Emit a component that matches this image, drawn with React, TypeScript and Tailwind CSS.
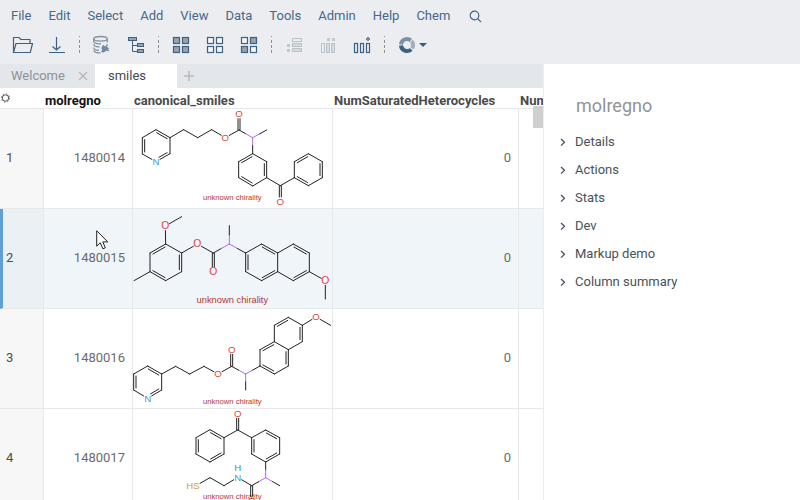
import React from "react";

type Atom = [number, number, string?];
type Bond = [number, number, ("double" | "ring")?];

interface Molecule {
  viewBox: string;
  atoms: Atom[];
  bonds: Bond[];
  rings: number[][];
  chiral: number;
  captionY: number;
  captionSize: number;
  labelSize: number;
}

const LABEL_COLORS: Record<string, string> = {
  O: "#dc4840",
  N: "#3f97d6",
  H: "#3d8fc8",
  HS: "#d39a48",
};

const MOLECULES: Molecule[] = [
  {
    viewBox: "9 12 600 300",
    atoms: [
      [78, 74], [120, 98], [120, 146], [78, 170, "N"], [37, 147], [37, 98],
      [161, 74], [203, 98], [245, 74], [286, 98, "O"], [327, 75], [327, 27, "O"],
      [368, 98], [410, 75],
      [368, 146], [410, 170], [410, 218], [368, 243], [326, 218], [326, 170],
      [451, 242], [451, 290, "O"],
      [493, 218], [493, 170], [535, 146], [577, 170], [577, 218], [535, 242],
    ],
    bonds: [
      [0, 1, "ring"], [1, 2], [2, 3, "ring"], [3, 4], [4, 5, "ring"], [5, 0],
      [1, 6], [6, 7], [7, 8], [8, 9], [9, 10], [10, 11, "double"], [10, 12], [12, 13],
      [12, 14], [14, 15], [15, 16, "ring"], [16, 17], [17, 18, "ring"], [18, 19], [19, 14, "ring"],
      [16, 20], [20, 21, "double"], [20, 22],
      [22, 23], [23, 24, "ring"], [24, 25], [25, 26, "ring"], [26, 27], [27, 22, "ring"],
    ],
    rings: [[0, 1, 2, 3, 4, 5], [14, 15, 16, 17, 18, 19], [22, 23, 24, 25, 26, 27]],
    chiral: 12,
    captionY: 285,
    captionSize: 23,
    labelSize: 29,
  },
  {
    viewBox: "9 3 600 300",
    atoms: [
      [60, 135], [107, 108], [155, 135], [155, 191], [107, 218], [60, 191],
      [12, 218], [106, 54, "O"], [155, 26], [202, 108, "O"], [250, 135], [250, 191, "O"],
      [298, 108], [298, 53],
      [347, 135], [395, 108], [443, 135], [443, 191], [395, 218], [347, 191],
      [490, 108], [538, 135], [538, 191], [490, 218], [586, 218, "O"], [586, 273],
    ],
    bonds: [
      [0, 1, "ring"], [1, 2], [2, 3, "ring"], [3, 4], [4, 5, "ring"], [5, 0],
      [5, 6], [1, 7], [7, 8], [2, 9], [9, 10], [10, 11, "double"], [10, 12], [12, 13], [12, 14],
      [14, 15], [15, 16, "ring"], [16, 17], [17, 18, "ring"], [18, 19], [19, 14, "ring"],
      [16, 20], [20, 21, "ring"], [21, 22], [22, 23, "ring"], [23, 17], [22, 24], [24, 25],
    ],
    rings: [[0, 1, 2, 3, 4, 5], [14, 15, 16, 17, 18, 19], [16, 20, 21, 22, 23, 17]],
    chiral: 12,
    captionY: 285,
    captionSize: 28,
    labelSize: 31,
  },
  {
    viewBox: "9 3 600 300",
    atoms: [
      [53, 174], [95, 198], [95, 246], [53, 271, "N"], [11, 246], [11, 198],
      [137, 175], [179, 198], [222, 175], [264, 198, "O"], [305, 175], [305, 125, "O"],
      [347, 198], [347, 246],
      [390, 174], [390, 125], [433, 101], [475, 125], [475, 174], [433, 198],
      [433, 52], [475, 28], [517, 52], [517, 101], [558, 27, "O"], [602, 52],
    ],
    bonds: [
      [0, 1, "ring"], [1, 2], [2, 3, "ring"], [3, 4], [4, 5, "ring"], [5, 0],
      [1, 6], [6, 7], [7, 8], [8, 9], [9, 10], [10, 11, "double"], [10, 12], [12, 13], [12, 14],
      [14, 15], [15, 16, "ring"], [16, 17], [17, 18, "ring"], [18, 19], [19, 14, "ring"],
      [16, 20], [20, 21, "ring"], [21, 22], [22, 23, "ring"], [23, 17], [22, 24], [24, 25],
    ],
    rings: [[0, 1, 2, 3, 4, 5], [14, 15, 16, 17, 18, 19], [16, 20, 21, 22, 23, 17]],
    chiral: 12,
    captionY: 289,
    captionSize: 23,
    labelSize: 29,
  },
  {
    viewBox: "9 12 600 300",
    atoms: [
      [240, 74], [282, 98], [282, 147], [240, 171], [198, 147], [198, 98],
      [323, 75], [323, 26, "O"],
      [365, 98], [407, 75], [449, 98], [449, 147], [407, 171], [365, 147],
      [407, 218], [449, 242], [365, 242], [365, 288, "O"], [323, 217, "N"], [323, 188, "H"],
      [282, 242], [240, 218], [198, 242, "HS"],
    ],
    bonds: [
      [0, 1, "ring"], [1, 2], [2, 3, "ring"], [3, 4], [4, 5, "ring"], [5, 0],
      [1, 6], [6, 7, "double"], [6, 8],
      [8, 9], [9, 10, "ring"], [10, 11], [11, 12, "ring"], [12, 13], [13, 8, "ring"],
      [12, 14], [14, 15], [14, 16], [16, 17, "double"], [16, 18], [18, 20], [20, 21], [21, 22],
    ],
    rings: [[0, 1, 2, 3, 4, 5], [8, 9, 10, 11, 12, 13]],
    chiral: 14,
    captionY: 282,
    captionSize: 23,
    labelSize: 29,
  },
];

function Structure({ molecule }: { molecule: Molecule }) {
  const { atoms, bonds, rings, chiral, labelSize } = molecule;

  const lines = bonds.flatMap(([a, b, kind], i) => {
    const [ax, ay, aLabel] = atoms[a];
    const [bx, by, bLabel] = atoms[b];
    const length = Math.hypot(bx - ax, by - ay);
    const ux = (bx - ax) / length;
    const uy = (by - ay) / length;
    const trimA = aLabel ? 14 : 0;
    const trimB = bLabel ? 14 : 0;
    const x1 = ax + ux * trimA;
    const y1 = ay + uy * trimA;
    const x2 = bx - ux * trimB;
    const y2 = by - uy * trimB;
    const out: React.ReactNode[] = [];

    if (kind === "double") {
      [-3, 3].forEach((d) =>
        out.push(<line key={`${i}${d}`} x1={x1 - uy * d} y1={y1 + ux * d} x2={x2 - uy * d} y2={y2 + ux * d} />),
      );
      return out;
    }

    if (a === chiral || b === chiral) {
      const mx = (ax + bx) / 2;
      const my = (ay + by) / 2;
      const violet = "#b866e6";
      out.push(
        <line key={`${i}a`} x1={x1} y1={y1} x2={mx} y2={my} stroke={a === chiral ? violet : undefined} />,
        <line key={`${i}b`} x1={mx} y1={my} x2={x2} y2={y2} stroke={b === chiral ? violet : undefined} />,
      );
      return out;
    }

    out.push(<line key={i} x1={x1} y1={y1} x2={x2} y2={y2} />);

    if (kind === "ring") {
      const ring = rings.find((r) => r.includes(a) && r.includes(b)) ?? [a, b];
      const cx = ring.reduce((s, n) => s + atoms[n][0], 0) / ring.length;
      const cy = ring.reduce((s, n) => s + atoms[n][1], 0) / ring.length;
      const side = (cx - ax) * -uy + (cy - ay) * ux > 0 ? 7 : -7;
      const inA = aLabel ? 0 : 6;
      const inB = bLabel ? 0 : 6;
      out.push(
        <line
          key={`${i}r`}
          x1={x1 + ux * inA - uy * side}
          y1={y1 + uy * inA + ux * side}
          x2={x2 - ux * inB - uy * side}
          y2={y2 - uy * inB + ux * side}
        />,
      );
    }
    return out;
  });

  return (
    <svg viewBox={molecule.viewBox} width="200" height="99" preserveAspectRatio="xMinYMin slice" className="block" fontFamily="'Liberation Sans', Arial, sans-serif">
      <text x="307" y={molecule.captionY} fontSize={molecule.captionSize} fill="#b5382f" textAnchor="middle">
        unknown chirality
      </text>
      <g stroke="#222" strokeWidth="3" strokeLinecap="round">
        {lines}
      </g>
      {atoms.map(([x, y, label], i) =>
        label ? (
          <text
            key={i}
            x={label === "HS" ? x - 9 : x}
            y={y + 10}
            fontSize={labelSize}
            fill={LABEL_COLORS[label]}
            textAnchor="middle"
          >
            {label}
          </text>
        ) : null,
      )}
    </svg>
  );
}

const NAVY = "#3d6185";
const STEEL = "#9aa2ab";
const PALE = "#b9c3c9";

function Glyph({ children }: { children: React.ReactNode }) {
  return (
    <svg width="24" height="20" viewBox="0 0 24 20" fill="none" stroke={NAVY} aria-hidden="true">
      {children}
    </svg>
  );
}

function Squares({ filled }: { filled: boolean[] }) {
  const spots = [[4.5, 2.5], [13.5, 2.5], [4.5, 11.5], [13.5, 11.5]];
  return (
    <Glyph>
      {spots.map(([x, y], i) => (
        <rect key={i} x={x} y={y} width="6" height="6" strokeWidth="1.2" fill={filled[i] ? STEEL : "#f3f5f8"} />
      ))}
    </Glyph>
  );
}

function ToolButton({ label, children }: { label: string; children: React.ReactNode }) {
  return (
    <button type="button" aria-label={label} className="flex h-6 w-[34px] shrink-0 items-center justify-center">
      {children}
    </button>
  );
}

function Divider() {
  return (
    <span className="flex w-[11px] shrink-0 justify-center">
      <svg width="1" height="18" aria-hidden="true">
        <path d="M.5 0V18" stroke="#8b9097" strokeDasharray="1 3 3 2 3 2 3 1" />
      </svg>
    </span>
  );
}

function Toolbar() {
  return (
    <div className="flex h-8 items-center px-1.5 pb-1.5" role="toolbar">
      <ToolButton label="Open file">
        <Glyph>
          <path strokeWidth="1.2" d="M2.5 17.5V2.5H8L9.8 4.5H19V8.5M2.5 17.5L5 8.5H21.5L19.3 17.5Z" />
        </Glyph>
      </ToolButton>
      <ToolButton label="Download">
        <Glyph>
          <path strokeWidth="1.2" d="M11.5 2V15M7.5 11.5L11.5 15L15.5 11.5M4 17.5H20" />
        </Glyph>
      </ToolButton>
      <Divider />
      <ToolButton label="Databases">
        <Glyph>
          <g stroke="#8594a5" strokeWidth="1.4">
            <ellipse cx="10.5" cy="3.8" rx="6.8" ry="2.3" />
            <path d="M3.7 4V6.5C4.5 8.5 8 9 11 8.8M3.7 9C4 11 6.5 12 9.5 11.8M3.7 12.5C4 15 6.5 15.5 9 15.3M3.7 15.5C4.5 17.5 8 18.2 10.5 17.8M17.3 4V7.5" />
          </g>
          <path d="M13 10L15.5 11.5L17 9L18 10L16.8 12L19.5 13.3L18 14L19.3 16.3L16 15.8C14.5 18 12 17.5 11 16.8L12.3 15C11 13.5 11.5 11.5 13 10Z" fill="#7589a0" stroke="none" />
        </Glyph>
      </ToolButton>
      <ToolButton label="Tree">
        <Glyph>
          <path d="M8.5 6V16.5H13M8.5 10.5H13" />
          <rect x="4.5" y="2.5" width="8" height="3" fill={STEEL} />
          <rect x="13.5" y="8.5" width="6" height="3" fill={STEEL} />
          <rect x="13.5" y="14.5" width="6" height="3" fill={STEEL} />
        </Glyph>
      </ToolButton>
      <Divider />
      <ToolButton label="Select all">
        <Squares filled={[true, true, true, true]} />
      </ToolButton>
      <ToolButton label="Select none">
        <Squares filled={[false, false, false, false]} />
      </ToolButton>
      <ToolButton label="Invert selection">
        <Squares filled={[false, true, true, false]} />
      </ToolButton>
      <Divider />
      <ToolButton label="Remove rows">
        <Glyph>
          <g stroke={PALE}>
            <rect x="10.5" y="3.5" width="9" height="3" />
            <rect x="10.5" y="8.5" width="9" height="3" fill="#d8dbdd" />
            <rect x="10.5" y="13.5" width="9" height="3" fill="#d8dbdd" />
          </g>
          <path d="M5 9H8V12H5ZM5 14H8V17H5Z" fill="#c3c8cd" stroke="none" />
        </Glyph>
      </ToolButton>
      <ToolButton label="Remove columns">
        <Glyph>
          <g stroke={PALE}>
            <rect x="5.5" y="8.5" width="3" height="9" />
            <rect x="10.5" y="8.5" width="3" height="9" fill="#d8dbdd" />
            <rect x="15.5" y="8.5" width="3" height="9" fill="#d8dbdd" />
          </g>
          <path d="M11 3H14V6H11ZM16 3H19V6H16Z" fill="#c3c8cd" stroke="none" />
        </Glyph>
      </ToolButton>
      <ToolButton label="Add column">
        <Glyph>
          <rect x="4.5" y="8.5" width="3" height="9" strokeWidth="1.2" />
          <rect x="10.5" y="8.5" width="3" height="9" strokeWidth="1.2" />
          <rect x="16.5" y="8.5" width="3" height="9" strokeWidth="1.2" />
          <path d="M18 2V6M16 4H20" stroke="#75869a" strokeWidth="2" />
        </Glyph>
      </ToolButton>
      <Divider />
      <button type="button" aria-label="Charts" className="flex h-6 items-center pl-[5px]">
        <Glyph>
          <g strokeWidth="4">
            <path d="M6 9.5A6 6 0 0 1 15.8 5.4" stroke="#7b90a6" />
            <path d="M16.5 6A6 6 0 0 1 17 13.3" stroke="#a5adb5" />
            <path d="M6 10.5A6 6 0 0 0 16.2 14.3" stroke="#3d6185" />
          </g>
        </Glyph>
        <svg width="8" height="4" viewBox="0 0 8 4" aria-hidden="true">
          <path d="M0 0H8L4 4Z" fill="#355c84" />
        </svg>
      </button>
    </div>
  );
}

const MENU = ["File", "Edit", "Select", "Add", "View", "Data", "Tools", "Admin", "Help", "Chem"];

const ROWS = [1480014, 1480015, 1480016, 1480017];

const SECTIONS = ["Details", "Actions", "Stats", "Dev", "Markup demo", "Column summary"];

function DataGrid() {
  const current = 1;
  return (
    <div className="relative min-h-0 flex-1 overflow-hidden bg-white">
      <table className="w-full table-fixed border-separate border-spacing-0">
        <colgroup>
          <col className="w-11" />
          <col className="w-[89px]" />
          <col className="w-[200px]" />
          <col className="w-[186px]" />
          <col />
        </colgroup>
        <thead>
          <tr className="h-[21px] text-left leading-[14px] whitespace-nowrap text-[#4a4a4a]">
            <th className="border-b border-[#e6e8ea] p-0">
              <button type="button" aria-label="Grid settings" className="block pl-px">
                <svg width="10" height="10" viewBox="0 0 10 10" fill="none" stroke="#555" aria-hidden="true">
                  <circle cx="4.5" cy="5" r="3.2" />
                  <circle cx="4.5" cy="5" r="4.2" strokeDasharray="1.3 2" />
                </svg>
              </button>
            </th>
            <th className="border-b border-[#e6e8ea] px-px pt-1.5 pb-0 text-[#111]">molregno</th>
            <th className="border-b border-[#e6e8ea] px-px pt-1.5 pb-0">canonical_smiles</th>
            <th className="border-b border-[#e6e8ea] px-px pt-1.5 pb-0">NumSaturatedHeterocycles</th>
            <th className="overflow-hidden border-b border-[#e6e8ea] px-px pt-1.5 pb-0">Num</th>
          </tr>
        </thead>
        <tbody>
          {ROWS.map((id, i) => {
            const active = i === current;
            return (
              <tr key={id} className={`h-[100px] text-[#6b6b6b] ${active ? "bg-[#f0f5fa]" : "bg-white"}`}>
                <th
                  scope="row"
                  className={`border-r border-b border-[#e6e8ea] pt-0 pb-0.5 text-left font-normal text-[#4d4d4d] ${
                    active ? "border-l-3 border-l-[#5f9fd8] bg-[#ebf0f4] pl-[3px]" : "bg-[#f7f7f7] pl-1.5"
                  }`}
                >
                  {i + 1}
                </th>
                <td className="border-r border-b border-[#e6e8ea] pt-0 pr-[7px] pb-0.5 text-right">{id}</td>
                <td className="border-r border-b border-[#e6e8ea] p-0">
                  <Structure molecule={MOLECULES[i]} />
                </td>
                <td className="border-r border-b border-[#e6e8ea] pt-0 pr-[7px] pb-0.5 text-right">0</td>
                <td className="border-b border-[#e6e8ea] p-0" />
              </tr>
            );
          })}
        </tbody>
      </table>
      <div className="absolute top-[18px] right-0 h-[22px] w-2.5 bg-[#cfcfcf]" />
      <svg className="absolute top-[142px] left-24" width="13" height="20" viewBox="0 0 13 20" aria-hidden="true">
        <path d="M.7 .8V16.2L4.3 12.8L6.9 18.8L9.3 17.8L6.8 11.9H11.8Z" fill="#fff" stroke="#222" />
      </svg>
    </div>
  );
}

export default function App() {
  return (
    <div className="flex h-screen flex-col overflow-hidden bg-white font-[Roboto,sans-serif] text-[13px] leading-4">
      <header className="bg-[#ecedf1]">
        <nav className="flex h-8 items-center gap-[17px] px-[11px]">
          {MENU.map((item) => (
            <button key={item} type="button" className="text-[#46688a]">
              {item}
            </button>
          ))}
          <button type="button" aria-label="Search" className="pl-0.5">
            <svg width="13" height="13" viewBox="0 0 13 13" fill="none" stroke="#46688a" strokeWidth="1.2" aria-hidden="true">
              <circle cx="5.5" cy="5.5" r="4.3" />
              <path d="M8.6 8.6L12 12" />
            </svg>
          </button>
        </nav>
        <Toolbar />
      </header>
      <div className="flex min-h-0 flex-1">
        <main className="flex min-w-0 flex-1 flex-col">
          <div className="flex h-6 shrink-0 bg-[#e3e6ea]" role="tablist">
            <div className="flex w-[95px] items-center justify-between pr-[7px] pl-[11px]">
              <button type="button" role="tab" aria-selected="false" className="text-[#8d9296]">
                Welcome
              </button>
              <button type="button" aria-label="Close Welcome">
                <svg width="10" height="10" viewBox="0 0 10 10" stroke="#bdb9bb" strokeWidth="1.5" aria-hidden="true">
                  <path d="M1 1L9 9M9 1L1 9" />
                </svg>
              </button>
            </div>
            <button type="button" role="tab" aria-selected="true" className="w-[82px] bg-white pl-[13px] text-left text-[#3f4a52]">
              smiles
            </button>
            <button type="button" aria-label="New tab" className="px-[7px]">
              <svg width="10" height="10" viewBox="0 0 10 10" stroke="#bdb9bb" strokeWidth="1.5" aria-hidden="true">
                <path d="M5 0V10M0 5H10" />
              </svg>
            </button>
          </div>
          <DataGrid />
        </main>
        <aside className="w-[257px] shrink-0 border-l border-[#ecedf1] bg-white pt-7 pl-4">
          <h2 className="pl-4 text-lg leading-7 text-[#8f9496]">molregno</h2>
          <ul className="pt-2">
            {SECTIONS.map((section) => (
              <li key={section}>
                <button type="button" aria-expanded="false" className="flex h-7 items-center gap-[9px] text-[#48525a]">
                  <svg width="6" height="9" viewBox="0 0 6 9" fill="none" stroke="#46536b" strokeWidth="1.3" aria-hidden="true">
                    <path d="M1 1L4.5 4.3L1 7.6" />
                  </svg>
                  {section}
                </button>
              </li>
            ))}
          </ul>
        </aside>
      </div>
    </div>
  );
}
